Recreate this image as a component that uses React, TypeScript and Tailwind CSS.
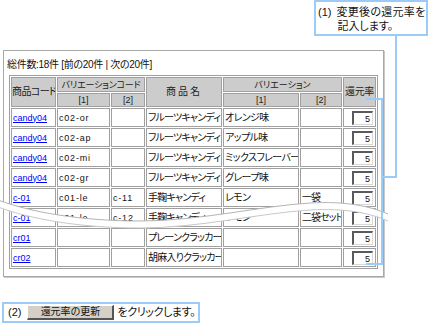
const rows = [
  { code: "candy04", v1: "c02-or", v2: "", name: "フルーツキャンディ", var1: "オレンジ味", var2: "" },
  { code: "candy04", v1: "c02-ap", v2: "", name: "フルーツキャンディ", var1: "アップル味", var2: "" },
  { code: "candy04", v1: "c02-mi", v2: "", name: "フルーツキャンディ", var1: "ミックスフレーバー", var2: "" },
  { code: "candy04", v1: "c02-gr", v2: "", name: "フルーツキャンディ", var1: "グレープ味", var2: "" },
  { code: "c-01", v1: "c01-le", v2: "c-11", name: "手鞠キャンディ", var1: "レモン", var2: "一袋" },
  { code: "c-01", v1: "c01-le", v2: "c-12", name: "手鞠キャンディ", var1: "レモン", var2: "二袋セット" },
  { code: "cr01", v1: "", v2: "", name: "プレーンクラッカー", var1: "", var2: "" },
  { code: "cr02", v1: "", v2: "", name: "胡麻入りクラッカー", var1: "", var2: "" },
];

const th = "border border-[#a0a0a0] bg-[#cccccc] p-0 font-normal text-center text-[#222] whitespace-nowrap overflow-hidden";
const td = "border border-[#a0a0a0] px-[1px] py-0 h-[19px] text-left whitespace-nowrap overflow-hidden";

function RateBox() {
  return (
    <div className="ml-auto w-[21px] h-[14px] border-t-2 border-l-2 border-t-[#5a5a5a] border-l-[#5a5a5a] border-b border-r border-b-[#d8d8d8] border-r-[#d8d8d8] bg-white text-right pr-[2px] leading-[12px] text-[9px]">
      5
    </div>
  );
}

export default function App() {
  return (
    <div className="relative w-[431px] h-[326px] bg-white overflow-hidden text-[#111] font-['Liberation_Sans','Noto_Sans_CJK_JP',sans-serif] [font-feature-settings:'palt']">
      {/* callout 1 */}
      <div className="flex justify-end pr-[3px]">
        <div className="w-[114px] h-[36px] border-2 border-[#9ccbf7] pl-[2px] pt-[3px] flex gap-[5px] text-[11px] leading-[14px] whitespace-nowrap">
          <span>(1)</span>
          <div>
            <div className="tracking-[0.3px]">変更後の還元率を</div>
            <div className="pl-[1px]">記入します。</div>
          </div>
        </div>
      </div>

      {/* panel */}
      <div className="ml-[3px] mt-[14px] w-[381px] h-[227px] border border-[#a8a8a8] shadow-[1px_1px_0_#c8c8c8] text-[10px]">
        <div className="pl-[3px] pt-[7px] leading-[14px] tracking-[-0.3px]">総件数:18件 [前の20件 | 次の20件]</div>
        <table className="ml-[5px] mt-[3px] w-[369px] table-fixed border-separate border-spacing-[1px] border border-[#a0a0a0] leading-[12px]">
          <colgroup>
            <col className="w-[45px]" />
            <col className="w-[53px]" />
            <col className="w-[34px]" />
            <col className="w-[76px]" />
            <col className="w-[76px]" />
            <col className="w-[42px]" />
            <col className="w-[33px]" />
          </colgroup>
          <thead>
            <tr>
              <th rowSpan={2} className={th + " tracking-[-0.6px]"}>商品コード</th>
              <th colSpan={2} className={th + " h-[15px] text-[9px] tracking-[-0.2px]"}>バリエーションコード</th>
              <th rowSpan={2} className={th + " tracking-[2px]"}>商品名</th>
              <th colSpan={2} className={th + " text-[9px]"}>バリエーション</th>
              <th rowSpan={2} className={th + " tracking-[-0.3px]"}>還元率</th>
            </tr>
            <tr>
              <th className={th + " h-[14px] text-[9px]"}>[1]</th>
              <th className={th + " text-[9px]"}>[2]</th>
              <th className={th + " text-[9px]"}>[1]</th>
              <th className={th + " text-[9px]"}>[2]</th>
            </tr>
          </thead>
          <tbody>
            {rows.map((r, i) => (
              <tr key={i}>
                <td className={td + " text-[9px]"}>
                  <a className="text-[#0000ff] underline">{r.code}</a>
                </td>
                <td className={td + " text-[9px] tracking-[0.8px]"}>{r.v1}</td>
                <td className={td + " text-[9px] tracking-[0.8px]"}>{r.v2}</td>
                <td className={td + " tracking-[-0.8px]"}>{r.name}</td>
                <td className={td + " tracking-[-0.6px]"}>{r.var1}</td>
                <td className={td + " tracking-[-1px]"}>{r.var2}</td>
                <td className={td + " pr-[2px]"}>
                  <RateBox />
                </td>
              </tr>
            ))}
          </tbody>
        </table>
      </div>

      {/* callout 2 */}
      <div className="ml-[2px] mt-[25px] w-[198px] h-[21px] border-2 border-[#9ccbf7] flex items-center pl-[4px] text-[11px] whitespace-nowrap">
        <span className="shrink-0">(2)</span>
        <div className="shrink-0 ml-[6px] w-[87px] h-[15px] bg-[#d4d0c8] border-t border-l border-t-white border-l-white border-b-2 border-r-2 border-b-[#555] border-r-[#555] flex items-center justify-center text-[10px] leading-none">
          還元率の更新
        </div>
        <span className="shrink-0 ml-[3px] tracking-[-0.4px]">をクリックします。</span>
      </div>

      {/* tear and connector lines */}
      <svg className="absolute left-0 top-0 pointer-events-none" width="431" height="326">
        <path
          d="M-2,200 C30,212 80,221 140,221 C200,221 260,206 310,203 C345,201 370,206 388,214 L388,221 C370,213 345,208 310,210 C260,213 200,228 140,228 C80,228 30,219 -2,207 Z"
          fill="#ffffff"
        />
        <path d="M-2,200 C30,212 80,221 140,221 C200,221 260,206 310,203 C345,201 370,206 388,214" fill="none" stroke="#b4b4b4" strokeWidth="1" />
        <path d="M-2,207 C30,219 80,228 140,228 C200,228 260,213 310,210 C345,208 370,213 388,221" fill="none" stroke="#c8c8c8" strokeWidth="1" />
        <g fill="#9ccbf7">
          <rect x="395" y="36" width="2" height="142" />
          <rect x="381" y="176" width="16" height="2" />
          <rect x="381" y="98" width="2" height="167" />
          <rect x="366" y="98" width="17" height="2" />
          <rect x="366" y="263" width="17" height="2" />
        </g>
      </svg>
    </div>
  );
}
